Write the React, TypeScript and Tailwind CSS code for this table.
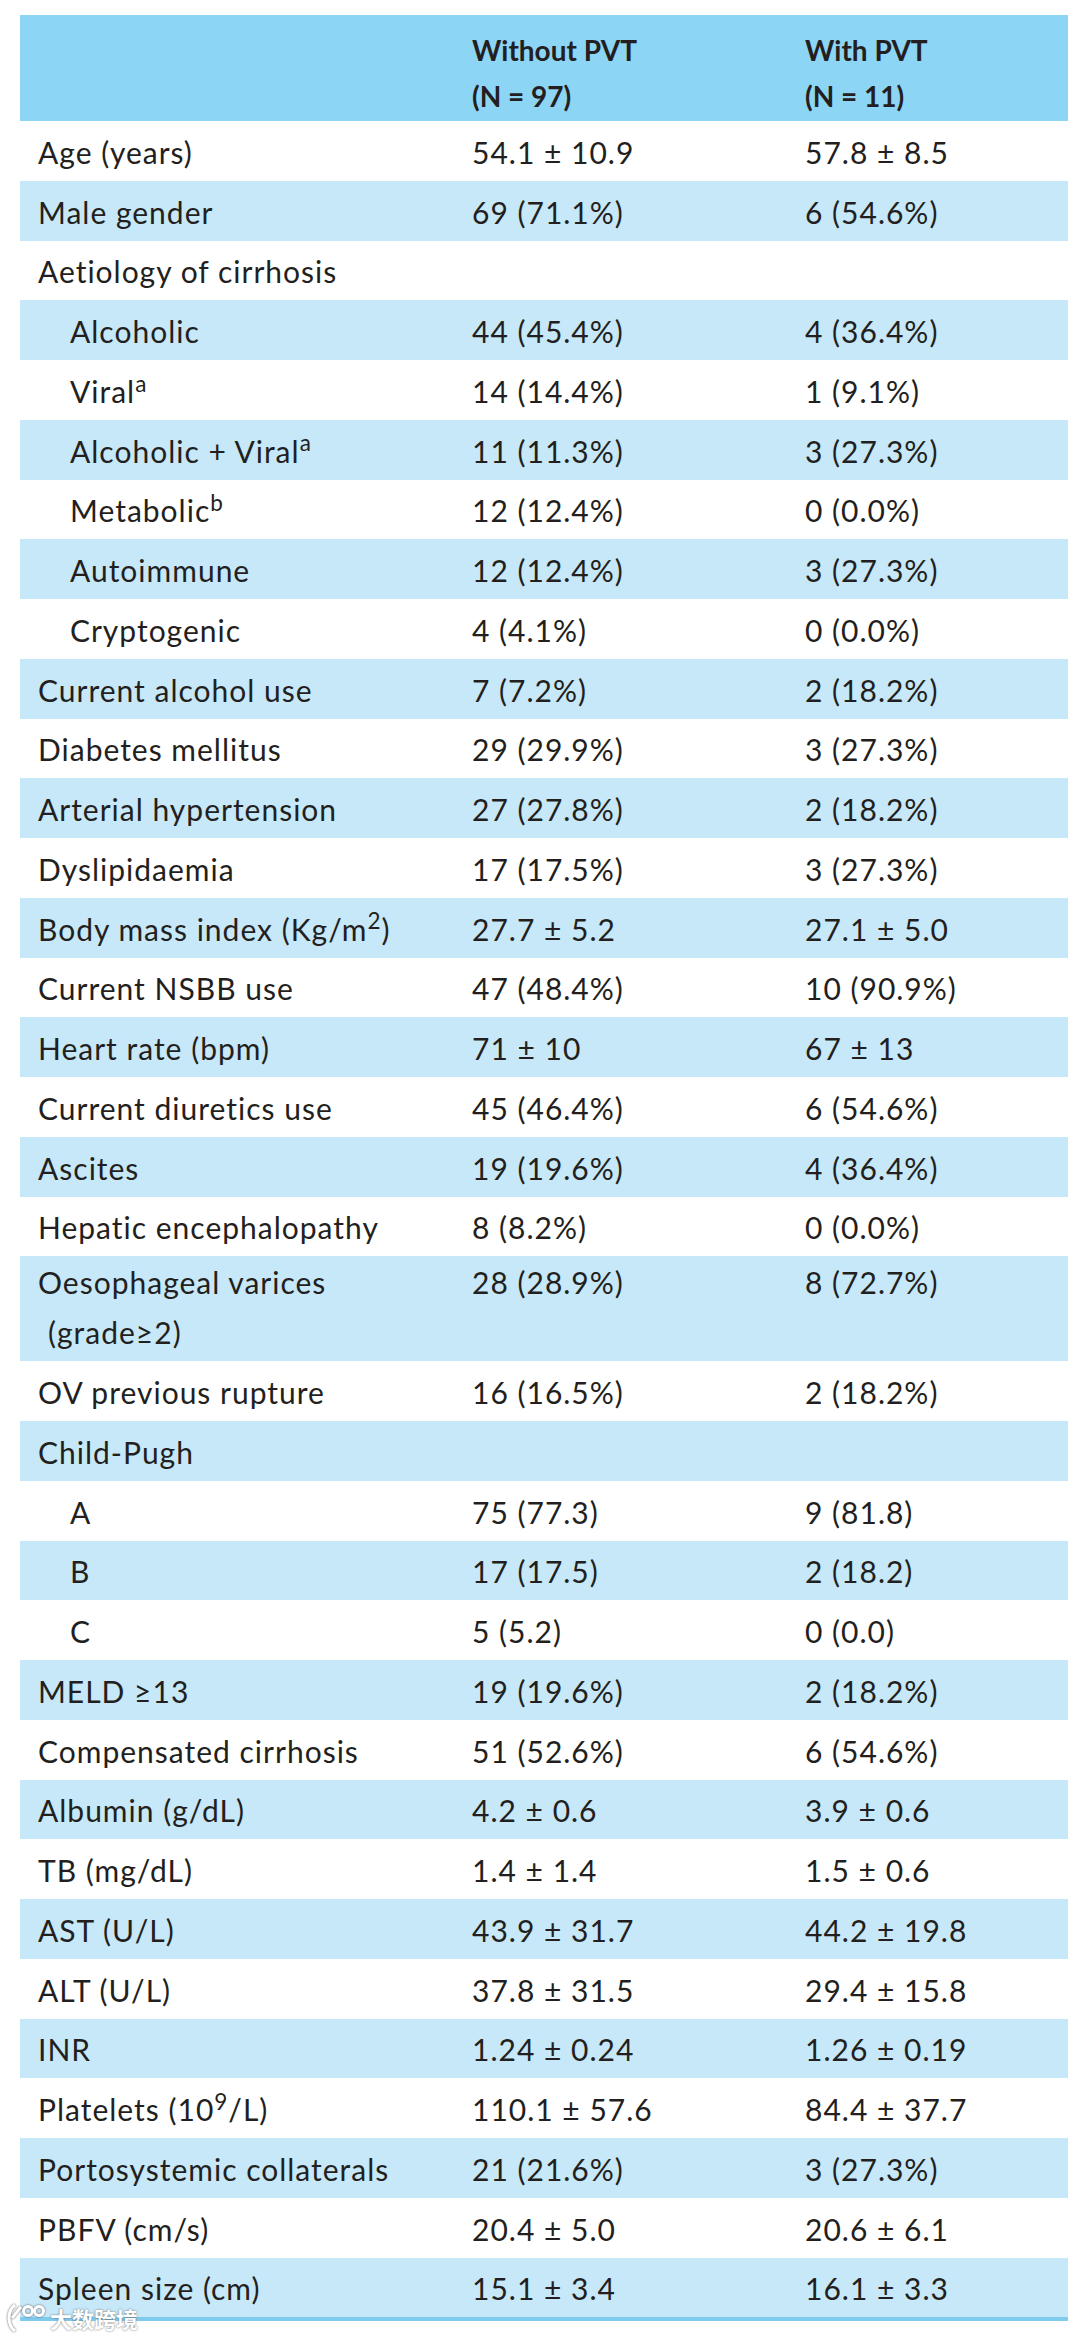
type Row = {
  label: React.ReactNode;
  a?: string;
  b?: string;
  indent?: boolean;
  tall?: boolean;
};

const rows: Row[] = [
  { label: 'Age (years)', a: '54.1 ± 10.9', b: '57.8 ± 8.5' },
  { label: 'Male gender', a: '69 (71.1%)', b: '6 (54.6%)' },
  { label: 'Aetiology of cirrhosis' },
  { label: 'Alcoholic', a: '44 (45.4%)', b: '4 (36.4%)', indent: true },
  { label: <>Viral<sup>a</sup></>, a: '14 (14.4%)', b: '1 (9.1%)', indent: true },
  { label: <>Alcoholic + Viral<sup>a</sup></>, a: '11 (11.3%)', b: '3 (27.3%)', indent: true },
  { label: <>Metabolic<sup>b</sup></>, a: '12 (12.4%)', b: '0 (0.0%)', indent: true },
  { label: 'Autoimmune', a: '12 (12.4%)', b: '3 (27.3%)', indent: true },
  { label: 'Cryptogenic', a: '4 (4.1%)', b: '0 (0.0%)', indent: true },
  { label: 'Current alcohol use', a: '7 (7.2%)', b: '2 (18.2%)' },
  { label: 'Diabetes mellitus', a: '29 (29.9%)', b: '3 (27.3%)' },
  { label: 'Arterial hypertension', a: '27 (27.8%)', b: '2 (18.2%)' },
  { label: 'Dyslipidaemia', a: '17 (17.5%)', b: '3 (27.3%)' },
  { label: <>Body mass index (Kg/m<sup>2</sup>)</>, a: '27.7 ± 5.2', b: '27.1 ± 5.0' },
  { label: 'Current NSBB use', a: '47 (48.4%)', b: '10 (90.9%)' },
  { label: 'Heart rate (bpm)', a: '71 ± 10', b: '67 ± 13' },
  { label: 'Current diuretics use', a: '45 (46.4%)', b: '6 (54.6%)' },
  { label: 'Ascites', a: '19 (19.6%)', b: '4 (36.4%)' },
  { label: 'Hepatic encephalopathy', a: '8 (8.2%)', b: '0 (0.0%)' },
  {
    label: (
      <>
        <span className="block">Oesophageal varices</span>
        <span className="block pl-[10px] mt-[14px]">(grade≥2)</span>
      </>
    ),
    a: '28 (28.9%)',
    b: '8 (72.7%)',
    tall: true,
  },
  { label: 'OV previous rupture', a: '16 (16.5%)', b: '2 (18.2%)' },
  { label: 'Child-Pugh' },
  { label: 'A', a: '75 (77.3)', b: '9 (81.8)', indent: true },
  { label: 'B', a: '17 (17.5)', b: '2 (18.2)', indent: true },
  { label: 'C', a: '5 (5.2)', b: '0 (0.0)', indent: true },
  { label: 'MELD ≥13', a: '19 (19.6%)', b: '2 (18.2%)' },
  { label: 'Compensated cirrhosis', a: '51 (52.6%)', b: '6 (54.6%)' },
  { label: 'Albumin (g/dL)', a: '4.2 ± 0.6', b: '3.9 ± 0.6' },
  { label: 'TB (mg/dL)', a: '1.4 ± 1.4', b: '1.5 ± 0.6' },
  { label: 'AST (U/L)', a: '43.9 ± 31.7', b: '44.2 ± 19.8' },
  { label: 'ALT (U/L)', a: '37.8 ± 31.5', b: '29.4 ± 15.8' },
  { label: 'INR', a: '1.24 ± 0.24', b: '1.26 ± 0.19' },
  { label: <>Platelets (10<sup>9</sup>/L)</>, a: '110.1 ± 57.6', b: '84.4 ± 37.7' },
  { label: 'Portosystemic collaterals', a: '21 (21.6%)', b: '3 (27.3%)' },
  { label: 'PBFV (cm/s)', a: '20.4 ± 5.0', b: '20.6 ± 6.1' },
  { label: 'Spleen size (cm)', a: '15.1 ± 3.4', b: '16.1 ± 3.3' },
];

export default function App() {
  return (
    <div className="relative min-h-[2337px] bg-white px-[20px] pt-[15px] text-[#231f20] [font-family:Lato,'Noto_Sans',sans-serif]">
      <div className="w-[1048px]">
        {/* header */}
        <div className="grid h-[106px] grid-cols-[434px_333px_1fr] bg-[#8dd5f5] pl-[18px] pt-[12px] text-[28px] font-bold leading-[46px]">
          <span />
          <div>
            <div>Without PVT</div>
            <div>(N = 97)</div>
          </div>
          <div>
            <div>With PVT</div>
            <div>(N = 11)</div>
          </div>
        </div>

        {rows.map((r, idx) => (
          <div
            key={idx}
            className={[
              'grid grid-cols-[434px_333px_1fr] pl-[18px] text-[30px] leading-[1.2] tracking-[1px]',
              r.tall ? 'h-[105px] items-start pt-[8px]' : 'h-[59.75px] items-center pt-[2px]',
              idx % 2 === 1 ? 'bg-[#c6e8f8]' : 'bg-white',
            ].join(' ')}
          >
            <div className={r.indent ? 'pl-[32px]' : ''}>{r.label}</div>
            <div>{r.a}</div>
            <div>{r.b}</div>
          </div>
        ))}
        <div className="h-[4px] bg-[#7fcbee]" />
      </div>

      {/* watermark */}
      <div className="absolute left-[4px] top-[2302px] flex items-center gap-[4px] text-white [text-shadow:0_0_2px_rgba(80,80,80,0.9)]">
        <svg width="42" height="32" viewBox="0 0 42 32" fill="none" stroke="white" strokeWidth="3" style={{ filter: 'drop-shadow(0 0 1px rgba(80,80,80,0.9))' }}>
          <path d="M11 3 C3 9 3 23 11 29" />
          <path d="M8 16 L17 5" />
          <circle cx="24" cy="9" r="4.5" />
          <circle cx="35" cy="9" r="4.5" />
        </svg>
        <span className="text-[22px] font-bold leading-none [font-family:'Noto_Sans_CJK_SC',sans-serif]">大数跨境</span>
      </div>
    </div>
  );
}
